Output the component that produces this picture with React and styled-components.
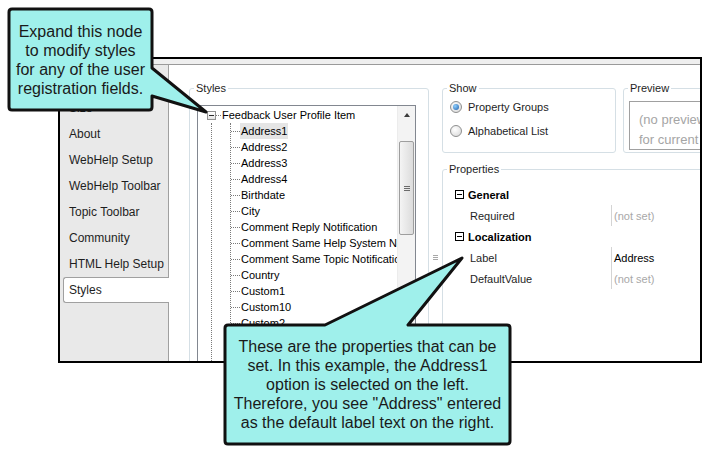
import React from "react";
import styled, { createGlobalStyle } from "styled-components";

const GlobalStyle = createGlobalStyle`
  html, body {
    margin: 0;
    padding: 0;
    background: #fff;
  }
  body {
    font-family: "Liberation Sans", Arial, sans-serif;
    color: #1e1e1e;
  }
`;

const Stage = styled.div`
  position: relative;
  width: 703px;
  height: 454px;
  padding: 57px 0 0 58px;
  box-sizing: border-box;
  overflow: hidden;
  background: #fff;
`;

const Window = styled.div`
  width: 644px;
  height: 306px;
  box-sizing: border-box;
  border: 2px solid #000;
  display: flex;
  flex-direction: column;
  overflow: hidden;
  background: #fff;
`;

const TitleStrip = styled.div`
  height: 5px;
  flex: 0 0 auto;
  background: #efefef;
  border-bottom: 1px solid #9a9a9a;
`;

const Body = styled.div`
  flex: 1;
  min-height: 0;
  display: flex;
`;

/* left tab list */
const Nav = styled.div`
  width: 109px;
  flex: 0 0 auto;
  box-sizing: border-box;
  padding-top: 4px;
  background: #e9e9e9;
  border-right: 1px solid #a0a0a0;
  display: flex;
  flex-direction: column;
`;

const NavItem = styled.div`
  height: 26px;
  box-sizing: border-box;
  display: flex;
  align-items: center;
  padding-left: 9px;
  font-size: 12px;
  color: #1e1e1e;
  white-space: nowrap;
  ${({ $active }) =>
    $active &&
    `
    margin: 0 -1px 0 3px;
    padding-left: 5px;
    background: #fff;
    border: 1px solid #a0a0a0;
    border-right: none;
    border-radius: 3px 0 0 3px;
  `}
`;

const Content = styled.div`
  flex: 1;
  display: flex;
  min-width: 0;
`;

/* group boxes */
const Group = styled.fieldset`
  margin: ${({ $mt }) => $mt || 0}px 0 0 ${({ $ml }) => $ml || 0}px;
  padding: 0;
  min-width: 0;
  width: ${({ $w }) => $w}px;
  flex: 0 0 auto;
  box-sizing: border-box;
  height: ${({ $h }) => ($h ? `${$h}px` : "auto")};
  border: 1px solid #d5dfe5;
  border-radius: 3px;
`;

const Legend = styled.legend`
  margin-left: 4px;
  padding: 0 2px;
  font-size: 11px;
  line-height: 14px;
  color: #1e1e1e;
`;

const GroupInner = styled.div`
  padding: ${({ $pad }) => $pad};
`;

/* tree */
const TreeBox = styled.div`
  width: 219px;
  height: 280px;
  box-sizing: border-box;
  border: 1px solid #828790;
  display: flex;
  background: #fff;
`;

const TreeList = styled.div`
  flex: 1;
  min-width: 0;
  overflow: hidden;
  padding-top: 1px;
  font-size: 11px;
  color: #000;
`;

const TreeRow = styled.div`
  height: 16px;
  display: flex;
  align-items: center;
  white-space: nowrap;
`;

const ExpandBox = styled.span`
  width: 9px;
  height: 9px;
  margin-left: 9px;
  box-sizing: border-box;
  border: 1px solid #919191;
  background: linear-gradient(#ffffff, #e4e4e4);
  display: flex;
  align-items: center;
  justify-content: center;
  flex: 0 0 auto;
  &::after {
    content: "";
    width: 5px;
    height: 1px;
    background: #2b2b2b;
  }
`;

const Branch = styled.span`
  width: ${({ $w }) => $w}px;
  height: 8px;
  flex: 0 0 auto;
  align-self: flex-start;
  border-bottom: 1px dotted #7a7a7a;
`;

const RootLine = styled.div`
  margin-left: 13px;
  border-left: 1px dotted #7a7a7a;
`;

const ChildList = styled.div`
  margin-left: 18px;
  border-left: 1px dotted #7a7a7a;
`;

const NodeText = styled.span`
  padding: 0 1px;
  line-height: 16px;
  background: ${({ $selected }) => ($selected ? "#e5e5e5" : "transparent")};
`;

const ScrollBar = styled.div`
  width: 17px;
  flex: 0 0 auto;
  background: #f3f3f3;
  border-left: 1px solid #ececec;
  display: flex;
  flex-direction: column;
  align-items: stretch;
`;

const ScrollArrow = styled.div`
  height: 17px;
  display: flex;
  align-items: center;
  justify-content: center;
  &::after {
    content: "";
    border-left: 3px solid transparent;
    border-right: 3px solid transparent;
    border-bottom: 4px solid #3c3c3c;
  }
`;

const ScrollThumb = styled.div`
  margin: 18px 1px 0;
  height: 94px;
  box-sizing: border-box;
  border: 1px solid #9e9e9e;
  border-radius: 2px;
  background: linear-gradient(to right, #f4f4f4, #dcdcdc);
  display: flex;
  align-items: center;
  justify-content: center;
`;

const Grip = styled.div`
  width: ${({ $w }) => $w}px;
  display: flex;
  flex-direction: column;
  gap: 1px;
  & > span {
    height: 1px;
    background: ${({ $c }) => $c};
  }
`;

/* splitter */
const Splitter = styled.div`
  width: 13px;
  flex: 0 0 auto;
  padding-top: 190px;
  display: flex;
  justify-content: center;
  align-items: flex-start;
`;

/* right panel */
const RightPanel = styled.div`
  flex: 1;
  display: flex;
  flex-direction: column;
  min-width: 0;
`;

const TopRow = styled.div`
  display: flex;
  gap: 7px;
  margin-top: 16px;
`;

const RadioRow = styled.label`
  height: 24px;
  display: flex;
  align-items: center;
  gap: 6px;
  font-size: 11px;
  color: #1e1e1e;
`;

const Radio = styled.span`
  width: 12px;
  height: 12px;
  box-sizing: border-box;
  border-radius: 50%;
  border: 1px solid #8e8f8f;
  background: radial-gradient(circle at 40% 35%, #ffffff, #d6d6d6);
  display: flex;
  align-items: center;
  justify-content: center;
  &::after {
    content: "";
    display: ${({ $checked }) => ($checked ? "block" : "none")};
    width: 6px;
    height: 6px;
    border-radius: 50%;
    background: radial-gradient(circle at 35% 35%, #8fd0ff, #1f5ea8);
  }
`;

const PreviewBox = styled.div`
  height: 49px;
  box-sizing: border-box;
  border: 1px solid #a0a0a0;
  border-right: none;
  padding: 8px 0 0 9px;
  overflow: hidden;
  font-size: 13px;
  line-height: 20px;
  color: #a5a5a5;
  white-space: nowrap;
`;

const PropRow = styled.div`
  height: 21px;
  display: flex;
  align-items: stretch;
  font-size: 11px;
  white-space: nowrap;
`;

const CategoryRow = styled(PropRow)`
  align-items: center;
  gap: 4px;
  font-weight: bold;
  color: #000;
`;

const CollapseBox = styled.span`
  width: 9px;
  height: 9px;
  box-sizing: border-box;
  border: 1px solid #000;
  display: flex;
  align-items: center;
  justify-content: center;
  &::after {
    content: "";
    width: 5px;
    height: 1px;
    background: #000;
  }
`;

const PropName = styled.span`
  width: 141px;
  padding-left: 15px;
  display: flex;
  align-items: center;
  color: #1e1e1e;
`;

const PropValue = styled.span`
  border-left: 1px solid #d4d4d4;
  padding-left: 2px;
  display: flex;
  align-items: center;
  color: ${({ $unset }) => ($unset ? "#a8a8a8" : "#000")};
`;

/* callouts */
const CalloutLayer = styled.svg`
  position: absolute;
  left: 0;
  top: 0;
  pointer-events: none;
`;

const CalloutText = styled.div`
  position: absolute;
  left: ${({ $x }) => $x}px;
  top: ${({ $y }) => $y}px;
  width: ${({ $w }) => $w}px;
  height: ${({ $h }) => $h}px;
  display: flex;
  align-items: center;
  justify-content: center;
  text-align: center;
  font-family: "Liberation Sans", Arial, sans-serif;
  font-size: 16px;
  line-height: 19px;
  color: #1a1a1a;
  white-space: nowrap;
`;

const navItems = [
  "General",
  "Size",
  "About",
  "WebHelp Setup",
  "WebHelp Toolbar",
  "Topic Toolbar",
  "Community",
  "HTML Help Setup",
  "Styles",
];

const treeItems = [
  "Address1",
  "Address2",
  "Address3",
  "Address4",
  "Birthdate",
  "City",
  "Comment Reply Notification",
  "Comment Same Help System Notification",
  "Comment Same Topic Notification",
  "Country",
  "Custom1",
  "Custom10",
  "Custom2",
  "Custom3",
  "Custom4",
];

const properties = [
  {
    group: "General",
    rows: [{ name: "Required", value: "(not set)", unset: true }],
  },
  {
    group: "Localization",
    rows: [
      { name: "Label", value: "Address" },
      { name: "DefaultValue", value: "(not set)", unset: true },
    ],
  },
];

const callouts = [
  {
    d: "M 12 9 H 149 Q 152 9 152 12 V 68 L 206 112 L 152 96 V 107 Q 152 110 149 110 H 12 Q 9 110 9 107 V 12 Q 9 9 12 9 Z",
    box: { x: 9, y: 9, w: 143, h: 101 },
    lines: ["Expand this node", "to modify styles", "for any of the user", "registration fields."],
  },
  {
    d: "M 228 325 H 325 L 462 258 L 408 325 H 507 Q 510 325 510 328 V 441 Q 510 444 507 444 H 228 Q 225 444 225 441 V 328 Q 225 325 228 325 Z",
    box: { x: 225, y: 325, w: 285, h: 119 },
    lines: [
      "These are the properties that can be",
      "set. In this example, the Address1",
      "option is selected on the left.",
      'Therefore, you see "Address" entered',
      "as the default label text on the right.",
    ],
  },
];

const App = () => {
  return (
    <Stage>
      <GlobalStyle />
      <Window>
        <TitleStrip />
        <Body>
          <Nav>
            {navItems.map((item) => (
              <NavItem key={item} $active={item === "Styles"}>
                {item}
              </NavItem>
            ))}
          </Nav>

          <Content>
            <Group $w={240} $h={300} $mt={16} $ml={20}>
              <Legend>Styles</Legend>
              <GroupInner $pad="10px 0 0 7px">
                <TreeBox>
                  <TreeList>
                    <TreeRow>
                      <ExpandBox />
                      <Branch $w={5} />
                      <NodeText>Feedback User Profile Item</NodeText>
                    </TreeRow>
                    <RootLine>
                      <ChildList>
                        {treeItems.map((item) => (
                          <TreeRow key={item}>
                            <Branch $w={9} />
                            <NodeText $selected={item === "Address1"}>{item}</NodeText>
                          </TreeRow>
                        ))}
                      </ChildList>
                    </RootLine>
                  </TreeList>
                  <ScrollBar>
                    <ScrollArrow />
                    <ScrollThumb>
                      <Grip $w={6} $c="#6b6b6b">
                        <span />
                        <span />
                        <span />
                      </Grip>
                    </ScrollThumb>
                  </ScrollBar>
                </TreeBox>
              </GroupInner>
            </Group>

            <Splitter>
              <Grip $w={5} $c="#a8a8a8">
                <span />
                <span />
                <span />
              </Grip>
            </Splitter>

            <RightPanel>
              <TopRow>
                <Group $w={174}>
                  <Legend>Show</Legend>
                  <GroupInner $pad="0 0 9px 7px">
                    <RadioRow>
                      <Radio $checked />
                      Property Groups
                    </RadioRow>
                    <RadioRow>
                      <Radio />
                      Alphabetical List
                    </RadioRow>
                  </GroupInner>
                </Group>
                <Group $w={200}>
                  <Legend>Preview</Legend>
                  <GroupInner $pad="6px 0 0 5px">
                    <PreviewBox>
                      (no preview available
                      <br />
                      for current selection)
                    </PreviewBox>
                  </GroupInner>
                </Group>
              </TopRow>

              <Group $w={320} $h={220} $mt={9}>
                <Legend>Properties</Legend>
                <GroupInner $pad="8px 0 0 12px">
                  {properties.map((cat) => (
                    <React.Fragment key={cat.group}>
                      <CategoryRow>
                        <CollapseBox />
                        {cat.group}
                      </CategoryRow>
                      {cat.rows.map((row) => (
                        <PropRow key={row.name}>
                          <PropName>{row.name}</PropName>
                          <PropValue $unset={row.unset}>{row.value}</PropValue>
                        </PropRow>
                      ))}
                    </React.Fragment>
                  ))}
                </GroupInner>
              </Group>
            </RightPanel>
          </Content>
        </Body>
      </Window>

      <CalloutLayer width="703" height="454" viewBox="0 0 703 454">
        {callouts.map((c, i) => (
          <path
            key={i}
            d={c.d}
            fill="#9ff0eb"
            stroke="#111"
            strokeWidth="3"
            strokeLinejoin="round"
          />
        ))}
      </CalloutLayer>
      {callouts.map((c, i) => (
        <CalloutText key={i} $x={c.box.x} $y={c.box.y} $w={c.box.w} $h={c.box.h}>
          <div>
            {c.lines.map((line) => (
              <div key={line}>{line}</div>
            ))}
          </div>
        </CalloutText>
      ))}
    </Stage>
  );
};

export default App;
